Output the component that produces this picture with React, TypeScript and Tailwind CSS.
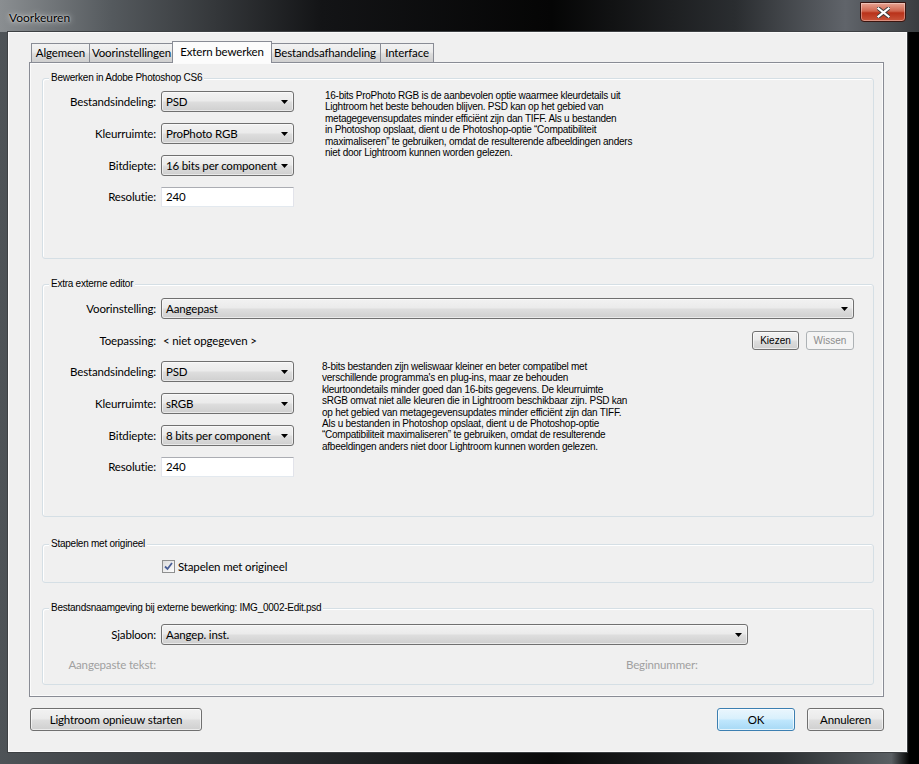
import React from "react";

const UI = "font-['Lato','Liberation_Sans',sans-serif]";
const SMALL = "font-['Liberation_Sans',sans-serif] text-[10px] tracking-[-0.25px]";
const T = "text-[11.5px] tracking-[-0.15px]";

function Arrow() {
  return (
    <svg width="7" height="4" viewBox="0 0 7 4" className="shrink-0">
      <path d="M0 0H7L3.5 4Z" fill="#000" />
    </svg>
  );
}

function Select({ className, value }: { className: string; value: string }) {
  return (
    <div
      className={`${className} h-[21px] flex items-center justify-between rounded-[3px] border border-[#707070] bg-[linear-gradient(#f2f2f2_0%,#ebebeb_45%,#dddddd_55%,#cfcfcf_100%)] pl-[4px] pr-[5px] shadow-[inset_0_0_0_1px_rgba(255,255,255,0.55)] ${T} text-black`}
    >
      <span className="leading-none whitespace-nowrap">{value}</span>
      <Arrow />
    </div>
  );
}

function Input({ value }: { value: string }) {
  return (
    <div className={`w-[133px] h-[20px] flex items-center bg-white border border-[#e2e3ea] border-t-[#abadb3] border-b-[#e3e9ef] pl-[4px] ${T} text-black`}>
      {value}
    </div>
  );
}

function Btn({
  className,
  children,
  disabled,
}: {
  className: string;
  children: React.ReactNode;
  disabled?: boolean;
}) {
  return (
    <div
      className={`${className} flex items-center justify-center rounded-[3px] border whitespace-nowrap ${
        disabled
          ? "border-[#adb2b5] bg-[#f4f4f4] text-[#8c8c8c]"
          : "border-[#707070] bg-[linear-gradient(#f2f2f2_0%,#ebebeb_45%,#dddddd_55%,#cfcfcf_100%)] text-black shadow-[inset_0_0_0_1px_rgba(255,255,255,0.6)]"
      }`}
    >
      {children}
    </div>
  );
}

function Group({
  title,
  className,
  children,
}: {
  title: string;
  className: string;
  children: React.ReactNode;
}) {
  return (
    <div
      className={`${className} relative w-[832px] rounded-[3px] border border-[#d5dfe5] shadow-[inset_1px_1px_0_#ffffff]`}
    >
      <div
        className={`absolute -top-[7px] left-[6px] bg-[#f0f0f0] px-[2px] leading-[12px] text-black whitespace-nowrap ${SMALL}`}
      >
        {title}
      </div>
      {children}
    </div>
  );
}

function Row({
  label,
  children,
  className,
}: {
  label: string;
  children: React.ReactNode;
  className?: string;
}) {
  return (
    <div className={`flex items-center ${className ?? ""}`}>
      <div className={`w-[113px] text-right ${T} text-black whitespace-nowrap`}>{label}</div>
      <div className="ml-[5px]">{children}</div>
    </div>
  );
}

function Desc({ lines, className }: { lines: string[]; className: string }) {
  return (
    <div className={`${className} ${SMALL} leading-[11.4px] text-black`}>
      {lines.map((l, i) => (
        <div key={i} className="whitespace-nowrap">
          {l}
        </div>
      ))}
    </div>
  );
}

const desc1 = [
  "16-bits ProPhoto RGB is de aanbevolen optie waarmee kleurdetails uit",
  "Lightroom het beste behouden blijven. PSD kan op het gebied van",
  "metagegevensupdates minder efficiënt zijn dan TIFF. Als u bestanden",
  "in Photoshop opslaat, dient u de Photoshop-optie “Compatibiliteit",
  "maximaliseren” te gebruiken, omdat de resulterende afbeeldingen anders",
  "niet door Lightroom kunnen worden gelezen.",
];

const desc2 = [
  "8-bits bestanden zijn weliswaar kleiner en beter compatibel met",
  "verschillende programma's en plug-ins, maar ze behouden",
  "kleurtoondetails minder goed dan 16-bits gegevens. De kleurruimte",
  "sRGB omvat niet alle kleuren die in Lightroom beschikbaar zijn. PSD kan",
  "op het gebied van metagegevensupdates minder efficiënt zijn dan TIFF.",
  "Als u bestanden in Photoshop opslaat, dient u de Photoshop-optie",
  "“Compatibiliteit maximaliseren” te gebruiken, omdat de resulterende",
  "afbeeldingen anders niet door Lightroom kunnen worden gelezen.",
];

function Tab({
  label,
  className,
  active,
}: {
  label: string;
  className: string;
  active?: boolean;
}) {
  return (
    <div
      className={`${className} flex items-center justify-center border border-b-0 border-[#898c95] ${T} text-black whitespace-nowrap ${
        active
          ? "relative z-10 h-[22px] -mb-px -mx-[2px] bg-[#fcfcfc] pb-[2px]"
          : "h-[19px] -ml-px first:ml-0 bg-[linear-gradient(#f2f2f2_0%,#ebebeb_45%,#dddddd_55%,#cfcfcf_100%)]"
      }`}
    >
      {label}
    </div>
  );
}

export default function App() {
  return (
    <div
      className={`w-[919px] h-[764px] overflow-hidden flex flex-col bg-[linear-gradient(90deg,#4e5357_0%,#2a2d30_30%,#0a0a0a_60%,#2c3033_85%,#5a5f63_97%,#000_99%)] ${UI}`}
    >
      {/* Title bar */}
      <div className="h-[32px] shrink-0 flex items-start bg-[linear-gradient(90deg,#8a8e91_0%,#555a5e_12%,#131416_35%,#050505_60%,#2a2d30_80%,#60646a_92%,#3a3d40_100%)]">
        <div className="mt-[9px] ml-[9px] text-[12px] text-black [text-shadow:0_0_6px_rgba(255,255,255,0.9),0_0_2px_rgba(255,255,255,0.8)]">
          Voorkeuren
        </div>
        <div className="ml-auto mr-[13px] mt-[2px] w-[46px] h-[20px] rounded-b-[4px] border border-[#3a1510] bg-[linear-gradient(#e8a493_0%,#d0664f_45%,#b9321a_55%,#c9553b_100%)] flex items-center justify-center shadow-[inset_0_0_0_1px_rgba(255,255,255,0.35)]">
          <svg width="13" height="11" viewBox="0 0 13 11">
            <path
              d="M1.5 1.5L11.5 9.5M11.5 1.5L1.5 9.5"
              stroke="#3a3a3a"
              strokeWidth="4"
              strokeLinecap="square"
            />
            <path
              d="M1.5 1.5L11.5 9.5M11.5 1.5L1.5 9.5"
              stroke="#ffffff"
              strokeWidth="2.2"
              strokeLinecap="square"
            />
          </svg>
        </div>
      </div>

      {/* Client area */}
      <div className="ml-[8px] w-[899px] h-[720px] shrink-0 bg-[#f0f0f0] border border-[#fafafa] shadow-[0_0_0_1px_#3d4043] pl-[20px] pt-[8px]">
        {/* Tabs */}
        <div className="flex items-end h-[21px] pl-[2px]">
          <Tab label="Algemeen" className="w-[59px]" />
          <Tab label="Voorinstellingen" className="w-[85px]" />
          <Tab label="Extern bewerken" className="w-[100px]" active />
          <Tab label="Bestandsafhandeling" className="w-[112px]" />
          <Tab label="Interface" className="w-[54px]" />
        </div>

        {/* Panel */}
        <div className="w-[855px] h-[635px] border border-[#898c95] bg-[#f0f0f0] shadow-[inset_0_0_0_1px_#fbfbfb] pl-[12px] pt-[15px]">
          {/* Group 1 */}
          <Group title="Bewerken in Adobe Photoshop CS6" className="h-[181px]">
            <div className="flex pt-[12px]">
              <div className="flex flex-col gap-[11px]">
                <Row label="Bestandsindeling:">
                  <Select className="w-[133px]" value="PSD" />
                </Row>
                <Row label="Kleurruimte:">
                  <Select className="w-[133px]" value="ProPhoto RGB" />
                </Row>
                <Row label="Bitdiepte:">
                  <Select className="w-[133px]" value="16 bits per component" />
                </Row>
                <Row label="Resolutie:">
                  <Input value="240" />
                </Row>
              </div>
              <Desc lines={desc1} className="ml-[31px] -mt-[1px]" />
            </div>
          </Group>

          {/* Group 2 */}
          <Group title="Extra externe editor" className="h-[233px] mt-[25px]">
            <div className="pt-[13px]">
              <Row label="Voorinstelling:">
                <Select className="w-[693px]" value="Aangepast" />
              </Row>
              <div className="flex items-center mt-[12px] h-[19px]">
                <div className={`w-[113px] text-right ${T} text-black`}>Toepassing:</div>
                <div className={`ml-[7px] ${T} text-black`}>&lt; niet opgegeven &gt;</div>
                <Btn className="ml-auto w-[47px] h-[19px] text-[10px] font-['Liberation_Sans',sans-serif]">
                  Kiezen
                </Btn>
                <Btn
                  disabled
                  className="ml-[7px] mr-[19px] w-[48px] h-[19px] text-[10px] font-['Liberation_Sans',sans-serif]"
                >
                  Wissen
                </Btn>
              </div>
              <div className="flex mt-[11px]">
                <div className="flex flex-col gap-[11px]">
                  <Row label="Bestandsindeling:">
                    <Select className="w-[133px]" value="PSD" />
                  </Row>
                  <Row label="Kleurruimte:">
                    <Select className="w-[133px]" value="sRGB" />
                  </Row>
                  <Row label="Bitdiepte:">
                    <Select className="w-[133px]" value="8 bits per component" />
                  </Row>
                  <Row label="Resolutie:">
                    <Input value="240" />
                  </Row>
                </div>
                <Desc lines={desc2} className="ml-[28px] mt-0" />
              </div>
            </div>
          </Group>

          {/* Group 3 */}
          <Group title="Stapelen met origineel" className="h-[39px] mt-[27px]">
            <div className="flex items-center pl-[119px] pt-[13px]">
              <div className="w-[13px] h-[13px] border border-[#8e8f8f] bg-[linear-gradient(135deg,#dcdcdc,#fdfdfd)] flex items-center justify-center">
                <svg width="9" height="9" viewBox="0 0 9 9">
                  <path d="M1 4.5L3.5 7L8 1" stroke="#4a5f97" strokeWidth="1.8" fill="none" />
                </svg>
              </div>
              <span className={`ml-[3px] ${T} text-black`}>Stapelen met origineel</span>
            </div>
          </Group>

          {/* Group 4 */}
          <Group
            title="Bestandsnaamgeving bij externe bewerking: IMG_0002-Edit.psd"
            className="h-[77px] mt-[25px]"
          >
            <div className="pt-[15px]">
              <Row label="Sjabloon:">
                <Select className="w-[587px] h-[20px]" value="Aangep. inst." />
              </Row>
              <div className={`flex items-center mt-[11px] ${T} text-[#a0a0a0]`}>
                <div className="w-[113px] text-right">Aangepaste tekst:</div>
                <div className="ml-[470px] w-[70px] text-right">Beginnummer:</div>
              </div>
            </div>
          </Group>
        </div>

        {/* Bottom buttons */}
        <div className="flex items-center mt-[11px] pr-[2px] w-[857px]">
          <Btn className={`ml-[1px] w-[172px] h-[23px] ${T}`}>Lightroom opnieuw starten</Btn>
          <div className="ml-auto flex gap-[12px]">
            <div className={`w-[78px] h-[23px] rounded-[3px] border border-[#3c7fb1] bg-[linear-gradient(#eaf6fd_0%,#d9f0fc_45%,#bee6fd_55%,#a7d9f5_100%)] shadow-[inset_0_0_0_1px_rgba(255,255,255,0.7)] flex items-center justify-center ${T} text-black`}>
              OK
            </div>
            <Btn className={`w-[77px] h-[23px] ${T}`}>Annuleren</Btn>
          </div>
        </div>
      </div>
    </div>
  );
}
